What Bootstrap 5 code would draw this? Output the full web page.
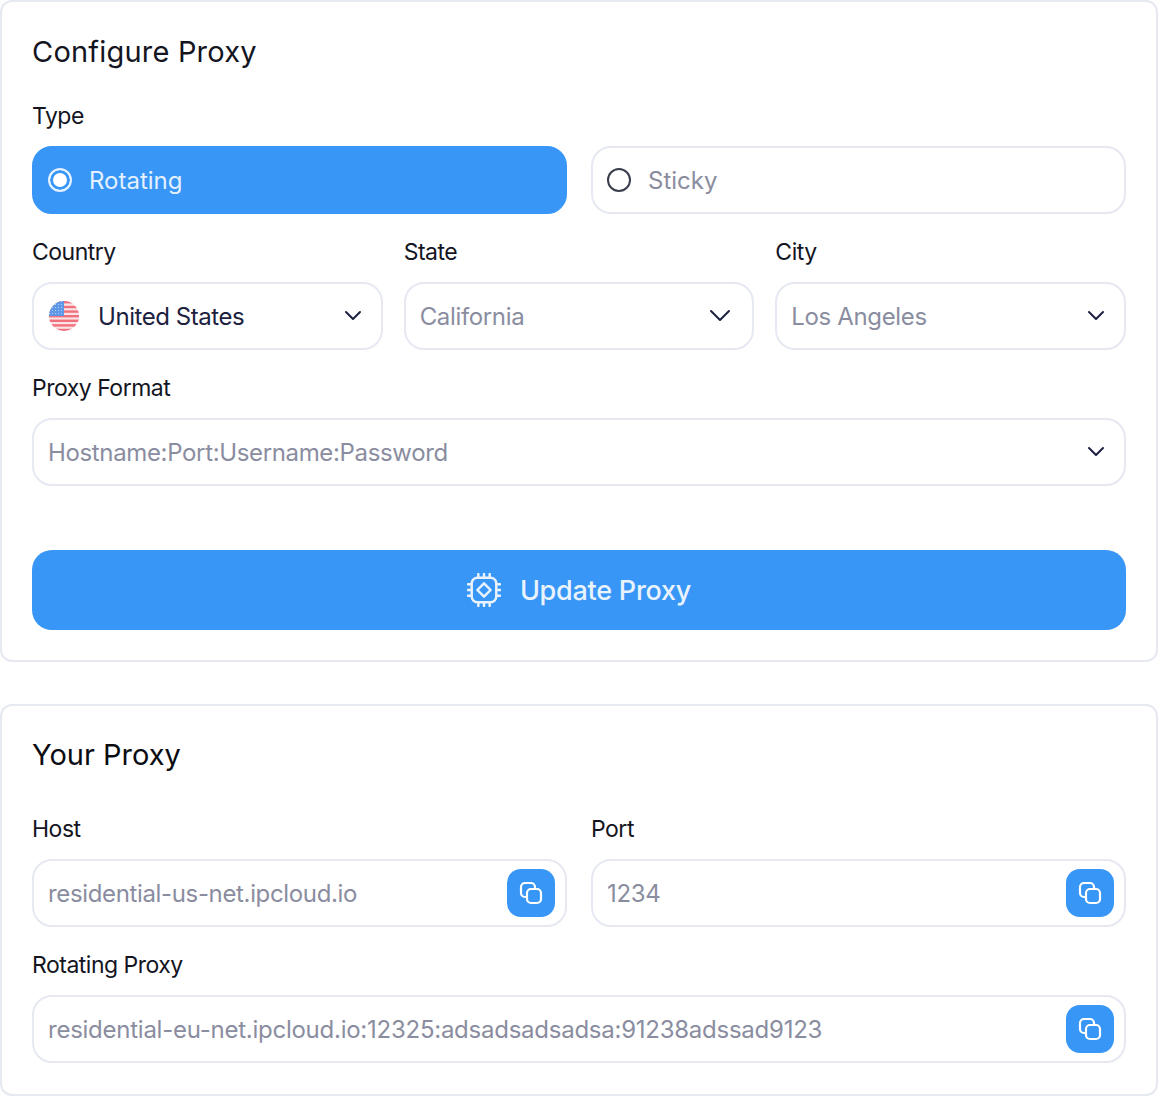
<!DOCTYPE html>
<html lang="en">
  <head>
    <meta charset="UTF-8" />
    <meta name="viewport" content="width=device-width, initial-scale=1.0" />
    <title>Configure Proxy</title>
    <link href="https://cdn.jsdelivr.net/npm/bootstrap@5.3.0/dist/css/bootstrap.min.css" rel="stylesheet" />
    <style>
      body {
        background-color: #fff;
        font-family: Inter, "Liberation Sans", sans-serif;
        color: #14151f;
      }
      .panel {
        border: 2px solid #e6e8f2;
        border-radius: 12px;
        padding: 30px;
        background: #fff;
      }
      .panel + .panel {
        margin-top: 42px;
      }
      .panel-one {
        height: 662px;
        padding-top: 32px;
      }
      .panel-two {
        height: 392px;
        padding-top: 31px;
      }
      .panel-title {
        font-size: 29px;
        font-weight: 400;
        line-height: 36px;
        margin: 0;
      }
      .field-label {
        display: block;
        font-size: 23px;
        line-height: 30px;
        letter-spacing: -0.5px;
        margin: 0 0 15px;
      }
      .field-box {
        height: 68px;
        border: 2px solid #e6e8f2;
        border-radius: 20px;
        padding: 0 14px;
        font-size: 24px;
        letter-spacing: -0.35px;
        color: #8a8d9f;
        background: #fff;
      }
      .field-text {
        padding-top: 2px;
      }
      .field-box.radio-box {
        letter-spacing: 0;
      }
      .field-box.long-value {
        letter-spacing: -0.25px;
      }
      .field-box.is-on {
        background: #3896f6;
        border-color: #3896f6;
        color: #e4f0fe;
      }
      .field-box .value-dark {
        color: #1c2140;
        letter-spacing: -0.45px;
      }
      .radio-dot {
        width: 24px;
        height: 24px;
        border-radius: 50%;
        border: 2px solid #3a3d4c;
        margin-right: 17px;
        flex: none;
      }
      .is-on .radio-dot {
        border-color: #e4f0fe;
        background: #fff;
        box-shadow: inset 0 0 0 3px #3896f6;
      }
      .chev {
        margin-left: auto;
        margin-right: 4px;
        flex: none;
      }
      .chev-wide {
        margin-right: 6px;
      }
      .row-type {
        gap: 24px;
        margin-bottom: 23px;
      }
      .row-geo {
        gap: 21px;
        margin-bottom: 23px;
      }
      .row-geo > div,
      .row-type > div,
      .row-host > div {
        flex: 1 1 0;
        min-width: 0;
      }
      .row-host {
        gap: 24px;
        margin-bottom: 23px;
      }
      .update-btn {
        width: 100%;
        height: 80px;
        margin-top: 64px;
        background: #3896f6;
        border: 0;
        border-radius: 20px;
        color: #e9f3fe;
        font-size: 27px;
        font-weight: 500;
        letter-spacing: -0.25px;
        gap: 19px;
      }
      .update-btn:hover {
        background: #3896f6;
        color: #e9f3fe;
      }
      .copy-btn {
        width: 48px;
        height: 48px;
        padding: 0;
        margin-left: auto;
        margin-right: -4px;
        background: #3896f6;
        border: 0;
        border-radius: 14px;
        flex: none;
      }
      .copy-btn:hover {
        background: #3896f6;
      }
      .flag-wrap {
        margin-right: 18px;
        flex: none;
      }
      .gap-title-one {
        margin-bottom: 31px;
        letter-spacing: 0.2px;
      }
      .gap-title-two {
        margin-bottom: 41px;
      }
      .panel-two .panel-title {
        color: #0b0c12;
      }
    </style>
  </head>
  <body>
    <div class="panel panel-one">
      <h2 class="panel-title gap-title-one">Configure Proxy</h2>
      <span class="field-label">Type</span>
      <div class="d-flex row-type">
        <div class="field-box radio-box is-on d-flex align-items-center"><span class="radio-dot"></span><span class="field-text">Rotating</span></div>
        <div class="field-box radio-box d-flex align-items-center"><span class="radio-dot"></span><span class="field-text">Sticky</span></div>
      </div>
      <div class="d-flex row-geo">
        <div>
          <label class="field-label">Country</label>
          <div class="field-box d-flex align-items-center">
            <svg class="flag-wrap" width="32" height="32" viewBox="0 0 32 32">
              <defs>
                <clipPath id="flagClip"><circle cx="16" cy="16" r="15"></circle></clipPath>
                <pattern id="flagStars" width="3" height="3" patternUnits="userSpaceOnUse"><rect width="3" height="3" fill="#5f97e8"></rect><rect x="1" y="1" width="1" height="1" fill="#b5cff5"></rect></pattern>
              </defs>
              <g clip-path="url(#flagClip)">
                <rect width="32" height="32" fill="#fbe3e5"></rect>
                <rect y="1" width="32" height="2.4" fill="#f0707e"></rect>
                <rect y="5.8" width="32" height="2.4" fill="#f0707e"></rect>
                <rect y="10.4" width="32" height="2.4" fill="#f0707e"></rect>
                <rect y="15" width="32" height="2.4" fill="#f0707e"></rect>
                <rect y="19.6" width="32" height="2.4" fill="#f0707e"></rect>
                <rect y="24.2" width="32" height="2.4" fill="#f0707e"></rect>
                <rect y="28.8" width="32" height="2.4" fill="#f0707e"></rect>
                <rect width="16" height="16" fill="url(#flagStars)"></rect>
              </g>
            </svg>
            <span class="value-dark field-text">United States</span>
            <svg class="chev" width="20" height="20" viewBox="0 0 20 20" fill="none" stroke="#1c2140" stroke-width="2" stroke-linecap="round" stroke-linejoin="round"><path d="M3 6l7 7 7-7"></path></svg>
          </div>
        </div>
        <div>
          <label class="field-label">State</label>
          <div class="field-box d-flex align-items-center">
            <span class="field-text">California</span>
            <svg class="chev chev-wide" width="24" height="20" viewBox="0 0 24 20" fill="none" stroke="#1c2140" stroke-width="2" stroke-linecap="round" stroke-linejoin="round"><path d="M3 5l9 9 9-9"></path></svg>
          </div>
        </div>
        <div>
          <label class="field-label">City</label>
          <div class="field-box d-flex align-items-center">
            <span class="field-text">Los Angeles</span>
            <svg class="chev" width="20" height="20" viewBox="0 0 20 20" fill="none" stroke="#1c2140" stroke-width="2" stroke-linecap="round" stroke-linejoin="round"><path d="M3 6l7 7 7-7"></path></svg>
          </div>
        </div>
      </div>
      <label class="field-label">Proxy Format</label>
      <div class="field-box d-flex align-items-center">
        <span class="field-text">Hostname:Port:Username:Password</span>
        <svg class="chev" width="20" height="20" viewBox="0 0 20 20" fill="none" stroke="#1c2140" stroke-width="2" stroke-linecap="round" stroke-linejoin="round"><path d="M3 6l7 7 7-7"></path></svg>
      </div>
      <button class="btn update-btn d-flex align-items-center justify-content-center">
        <svg width="34" height="34" viewBox="0 0 36 36" fill="none" stroke="#e9f3fe" stroke-width="2.6" stroke-linecap="round" stroke-linejoin="round">
          <rect x="5" y="5" width="26" height="26" rx="6"></rect>
          <path d="M18 11l7 7-7 7-7-7z"></path>
          <path d="M12 1v3M18 1v3M24 1v3M12 32v3M18 32v3M24 32v3M1 12h3M1 18h3M1 24h3M32 12h3M32 18h3M32 24h3"></path>
        </svg>
        <span class="field-text">Update Proxy</span>
      </button>
    </div>

    <div class="panel panel-two">
      <h2 class="panel-title gap-title-two">Your Proxy</h2>
      <div class="d-flex row-host">
        <div>
          <label class="field-label">Host</label>
          <div class="field-box d-flex align-items-center">
            <span class="field-text">residential-us-net.ipcloud.io</span>
            <button class="btn copy-btn d-flex align-items-center justify-content-center" aria-label="Copy">
              <svg width="28" height="28" viewBox="0 0 28 28" fill="none" stroke="#fff" stroke-width="2.2"><rect x="4" y="4" width="14" height="14" rx="4"></rect><rect x="10" y="10" width="14" height="14" rx="4" fill="#3896f6"></rect></svg>
            </button>
          </div>
        </div>
        <div>
          <label class="field-label">Port</label>
          <div class="field-box d-flex align-items-center">
            <span class="field-text">1234</span>
            <button class="btn copy-btn d-flex align-items-center justify-content-center" aria-label="Copy">
              <svg width="28" height="28" viewBox="0 0 28 28" fill="none" stroke="#fff" stroke-width="2.2"><rect x="4" y="4" width="14" height="14" rx="4"></rect><rect x="10" y="10" width="14" height="14" rx="4" fill="#3896f6"></rect></svg>
            </button>
          </div>
        </div>
      </div>
      <label class="field-label">Rotating Proxy</label>
      <div class="field-box long-value d-flex align-items-center">
        <span class="field-text">residential-eu-net.ipcloud.io:12325:adsadsadsadsa:91238adssad9123</span>
        <button class="btn copy-btn d-flex align-items-center justify-content-center" aria-label="Copy">
          <svg width="28" height="28" viewBox="0 0 28 28" fill="none" stroke="#fff" stroke-width="2.2"><rect x="4" y="4" width="14" height="14" rx="4"></rect><rect x="10" y="10" width="14" height="14" rx="4" fill="#3896f6"></rect></svg>
        </button>
      </div>
    </div>
    <script src="https://cdn.jsdelivr.net/npm/bootstrap@5.3.0/dist/js/bootstrap.bundle.min.js"></script>
  </body>
</html>
